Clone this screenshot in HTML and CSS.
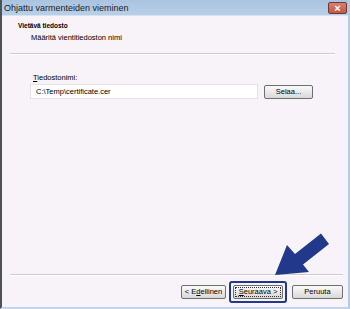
FILE: index.html
```html
<!DOCTYPE html>
<html lang="fi">
<head>
<meta charset="utf-8">
<link rel="stylesheet" href="styles.css">
</head>
<body>
<div class="window">
  <div class="titlebar">
    <span class="title">Ohjattu varmenteiden vieminen</span>
    <span class="close">×</span>
  </div>
  <div class="header">
    <div class="h-title">Vietävä tiedosto</div>
    <div class="h-sub">Määritä vientitiedoston nimi</div>
  </div>
  <div class="sep sep-top"></div>
  <div class="body">
    <div class="label"><u>T</u>iedostonimi:</div>
    <div class="row">
      <div class="input">C:\Temp\certificate.cer</div>
      <span class="btn browse">Selaa...</span>
    </div>
  </div>
  <div class="sep sep-bottom"></div>
  <div class="footer">
    <span class="btn">&lt; E<u>d</u>ellinen</span>
    <span class="focus"><span class="btn next"><u>S</u>euraava &gt;</span></span>
    <span class="btn">Peruuta</span>
  </div>
  <svg class="arrow" width="350" height="309" viewBox="0 0 350 309">
    <polygon points="275,275 287,245 295,254 321,233.5 329,244 303,264.5 309,272" fill="#22388a"/>
  </svg>
</div>
</body>
</html>
```
FILE: styles.css
```css
html, body { margin: 0; padding: 0; }
body { width: 350px; height: 309px; overflow: hidden; background: #f7f3f9; font-family: "Liberation Sans", Arial, sans-serif; color: #000; }
.window {
  position: relative;
  width: 350px; height: 309px;
  box-sizing: border-box;
  display: flex; flex-direction: column;
  background: #f7f3f9;
  border-left: 2px solid #4e5258;
  border-right: 2px solid #b3cbe4;
  border-bottom: 2px solid #c3d5ea;
}
.titlebar {
  height: 15px;
  flex: none;
  background: linear-gradient(#aac4e0, #b8cfe7);
  border-bottom: 1px solid #d6e3f1;
  display: flex; align-items: center; justify-content: space-between;
  padding: 0 1px 0 2px;
}
.title { font-size: 9px; color: #1b1b1b; }
.close {
  width: 17px; height: 10px;
  background: linear-gradient(#d98070, #c25843);
  border: 1px solid #6b3a33;
  border-radius: 2px;
  color: #fff; font-size: 11px; line-height: 10px; font-weight: bold;
  text-align: center;
}
.header { height: 37px; padding: 5px 0 0 16px; box-sizing: border-box; flex: none; }
.h-title { font-size: 6.5px; font-weight: bold; height: 9px; line-height: 9px; }
.h-sub { font-size: 7.5px; padding-left: 13px; margin-top: 3px; line-height: 10px; }
.sep { height: 0; border-top: 1px solid #d0cbd3; border-bottom: 1px solid #ffffff; flex: none; }
.sep-top { margin: 0 13px 0 8px; }
.sep-bottom { margin: 0 5px 0 8px; }
.body { flex: 1; padding: 18px 0 0 28px; }
.label { font-size: 7.5px; line-height: 10px; padding-left: 3px; }
.row { display: flex; align-items: center; margin-top: 1px; }
.input {
  width: 228px; height: 15px; box-sizing: border-box;
  background: #fff;
  border: 1px solid #e4e0e6;
  font-size: 7.5px; line-height: 13px;
  padding-left: 5px;
}
.btn {
  display: inline-flex; align-items: center; justify-content: center;
  height: 14px; box-sizing: border-box;
  border: 1px solid #6f6f6f; border-radius: 2px;
  background: linear-gradient(#fafafa, #e6e6e6 60%, #d8d8d8);
  font-size: 7.5px; white-space: nowrap;
}
.browse { width: 49px; margin-left: 6px; }
.footer { height: 31px; flex: none; display: flex; align-items: center; justify-content: flex-end; padding-right: 5px; gap: 3px; }
.footer > .btn { width: 45px; }
.footer > .btn:last-child { width: 51px; margin-left: 2px; }
.focus { border: 2px solid #23398c; border-radius: 3px; padding: 2px; display: inline-flex; }
.next { width: 50px; outline: 1px dotted #333; outline-offset: -3px; }
.arrow { position: absolute; left: -2px; top: 0; pointer-events: none; }
```
